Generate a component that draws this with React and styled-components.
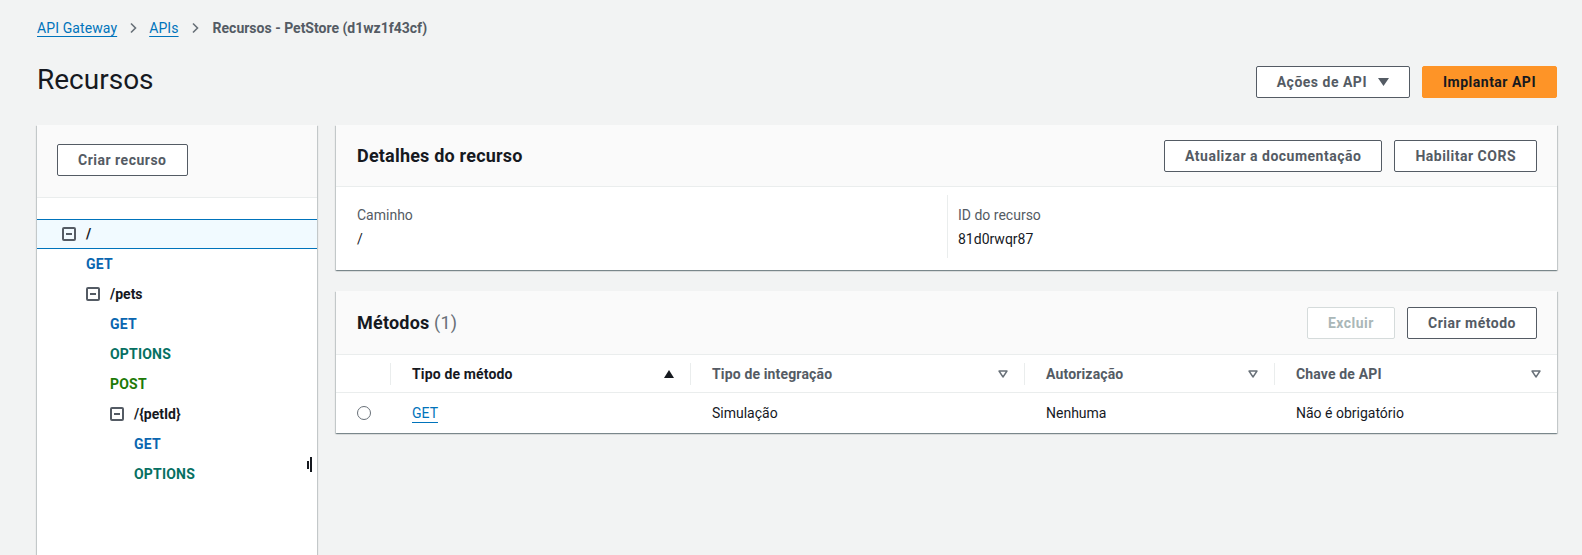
import React from "react";
import styled, { createGlobalStyle } from "styled-components";

const Global = createGlobalStyle`
  html, body { margin: 0; padding: 0; background: #f2f3f3; overflow: hidden; }
  body { font-family: Roboto, "Liberation Sans", Arial, sans-serif; color: #16191f; font-size: 14px; }
  * { box-sizing: border-box; }
`;

const Page = styled.div`
  padding: 0 25px 0 37px;
  height: 555px;
  overflow: hidden;
`;

const Crumbs = styled.nav`
  display: flex;
  align-items: center;
  height: 20px;
  margin-top: 18px;
  gap: 10px;
  font-size: 14px;
  line-height: 20px;
`;

const CrumbLink = styled.a`
  color: #0073bb;
  text-decoration: underline;
  text-underline-offset: 3px;
  letter-spacing: 0.1px;
`;

const CrumbCurrent = styled.span`
  color: #545b64;
  font-weight: 700;
  margin-left: 2px;
`;

const Chevron = () => (
  <svg width="12" height="12" viewBox="0 0 12 12" fill="none">
    <polyline points="4,1.5 8.5,6 4,10.5" stroke="#687078" strokeWidth="1.6" />
  </svg>
);

const HeaderRow = styled.div`
  display: flex;
  align-items: center;
  justify-content: space-between;
  margin-top: 28px;
  height: 32px;
`;

const Title = styled.h1`
  margin: 0;
  font-size: 28px;
  font-weight: 400;
  line-height: 32px;
  color: #16191f;
  position: relative;
  top: -2px;
`;

const Actions = styled.div`
  display: flex;
  gap: 12px;
  align-items: center;
`;

const Button = styled.button`
  font-family: inherit;
  font-size: 14px;
  font-weight: 700;
  letter-spacing: 0.5px;
  height: 32px;
  padding: 0 20px;
  border-radius: 2px;
  display: inline-flex;
  align-items: center;
  gap: 11px;
  background: ${(p) => (p.$primary ? "#fe9427" : "#ffffff")};
  border: 1px solid ${(p) => (p.$primary ? "#fe9427" : p.$disabled ? "#d5dbdb" : "#545b64")};
  color: ${(p) => (p.$primary ? "#16191f" : p.$disabled ? "#aab7b8" : "#545b64")};
  cursor: pointer;
`;

const Caret = () => (
  <svg width="11" height="8" viewBox="0 0 11 8">
    <polygon points="0,0 11,0 5.5,8" fill="#545b64" />
  </svg>
);

const Main = styled.div`
  display: flex;
  gap: 19px;
  margin-top: 27px;
  align-items: flex-start;
`;

const shadow = `box-shadow: 0 1px 1px 0 rgba(0,28,36,.3), 1px 1px 1px 0 rgba(0,28,36,.15), -1px 1px 1px 0 rgba(0,28,36,.15);`;

const SidePanel = styled.aside`
  position: relative;
  width: 280px;
  flex: none;
  min-height: 460px;
  background: #ffffff;
  ${shadow}
`;

const SideHeader = styled.div`
  height: 73px;
  background: #fafafa;
  border-bottom: 1px solid #eaeded;
  padding: 19px 20px 0;
`;

const Tree = styled.div`
  padding-top: 21px;
  display: flex;
  flex-direction: column;
`;

const TreeRow = styled.div`
  height: 30px;
  display: flex;
  align-items: center;
  gap: 10px;
  padding-left: ${(p) => 25 + p.$level * 24}px;
  background: ${(p) => (p.$selected ? "#f1faff" : "transparent")};
  border-top: 1px solid ${(p) => (p.$selected ? "#0073bb" : "transparent")};
  border-bottom: 1px solid ${(p) => (p.$selected ? "#0073bb" : "transparent")};
  font-weight: 700;
  font-size: 14px;
`;

const ResName = styled.span`
  color: #16191f;
`;

const methodColors = {
  GET: "#0a66b0",
  OPTIONS: "#067062",
  POST: "#1d7a08",
};

const Method = styled.span`
  color: ${(p) => methodColors[p.$m]};
  margin-left: 24px;
  letter-spacing: 0.2px;
`;

const Collapse = styled.span`
  width: 14px;
  height: 14px;
  border: 2px solid #545b64;
  border-radius: 2px;
  display: inline-flex;
  align-items: center;
  justify-content: center;
  flex: none;
  &::after {
    content: "";
    width: 6px;
    height: 2px;
    background: #545b64;
  }
`;

const Handle = styled.div`
  position: absolute;
  left: 270px;
  top: 332px;
  height: 15px;
  display: flex;
  align-items: center;
  gap: 1px;
  &::before {
    content: "";
    width: 2px;
    height: 8px;
    background: #16191f;
  }
  &::after {
    content: "";
    width: 2px;
    height: 15px;
    background: #16191f;
  }
`;

const Column = styled.div`
  flex: 1;
  display: flex;
  flex-direction: column;
  gap: 21px;
`;

const Card = styled.section`
  background: #ffffff;
  ${shadow}
`;

const CardHeader = styled.div`
  height: ${(p) => p.$h || 62}px;
  background: #fafafa;
  border-bottom: 1px solid #eaeded;
  display: flex;
  align-items: center;
  justify-content: space-between;
  padding: 0 20px 0 21px;
`;

const CardTitle = styled.h2`
  margin: 0;
  font-size: 18px;
  font-weight: 700;
  color: #16191f;
  letter-spacing: 0.2px;
`;

const Count = styled.span`
  font-weight: 400;
  color: #687078;
`;

const Details = styled.div`
  display: grid;
  grid-template-columns: 1fr 1fr;
  padding: 8px 20px 12px 21px;
`;

const Field = styled.div`
  padding: 10px 0 9px ${(p) => (p.$divided ? "10px" : "0")};
  border-left: ${(p) => (p.$divided ? "1px solid #eaeded" : "none")};
  display: flex;
  flex-direction: column;
  gap: 4px;
  line-height: 20px;
`;

const Label = styled.span`
  color: #545b64;
  font-size: 14px;
`;

const Value = styled.span`
  color: #16191f;
  font-size: 14px;
`;

const cols = "54px 300px 334px 250px 1fr";

const THead = styled.div`
  display: grid;
  grid-template-columns: ${cols};
  height: 38px;
  border-bottom: 1px solid #eaeded;
  align-items: center;
`;

const Th = styled.div`
  height: 22px;
  display: flex;
  align-items: center;
  justify-content: space-between;
  padding: 0 16px 0 21px;
  border-left: ${(p) => (p.$first ? "none" : "1px solid #eaeded")};
  font-weight: 700;
  letter-spacing: 0.15px;
  color: ${(p) => (p.$sorted ? "#16191f" : "#545b64")};
`;

const TRow = styled.div`
  display: grid;
  grid-template-columns: ${cols};
  height: 40px;
  align-items: center;
`;

const Td = styled.div`
  padding-left: ${(p) => (p.$radio ? "21px" : "22px")};
  color: #16191f;
`;

const Radio = styled.span`
  display: block;
  width: 14px;
  height: 14px;
  border-radius: 50%;
  border: 1px solid #687078;
`;

const TLink = styled.a`
  color: #0073bb;
  text-decoration: underline;
  text-underline-offset: 4px;
`;

const SortUp = () => (
  <svg width="10" height="8" viewBox="0 0 10 8">
    <polygon points="5,0 10,8 0,8" fill="#16191f" />
  </svg>
);

const SortDown = () => (
  <svg width="10" height="8" viewBox="0 0 10 8">
    <polygon points="1,1 9,1 5,7" fill="none" stroke="#687078" strokeWidth="1.4" strokeLinejoin="round" />
  </svg>
);

const tree = [
  { type: "res", level: 0, name: "/", selected: true },
  { type: "m", level: 0, name: "GET" },
  { type: "res", level: 1, name: "/pets" },
  { type: "m", level: 1, name: "GET" },
  { type: "m", level: 1, name: "OPTIONS" },
  { type: "m", level: 1, name: "POST" },
  { type: "res", level: 2, name: "/{petId}" },
  { type: "m", level: 2, name: "GET" },
  { type: "m", level: 2, name: "OPTIONS" },
];

export default function App() {
  return (
    <Page>
      <Global />
      <Crumbs>
        <CrumbLink>API Gateway</CrumbLink>
        <Chevron />
        <CrumbLink>APIs</CrumbLink>
        <Chevron />
        <CrumbCurrent>Recursos - PetStore (d1wz1f43cf)</CrumbCurrent>
      </Crumbs>
      <HeaderRow>
        <Title>Recursos</Title>
        <Actions>
          <Button>
            Ações de API <Caret />
          </Button>
          <Button $primary>Implantar API</Button>
        </Actions>
      </HeaderRow>
      <Main>
        <SidePanel>
          <SideHeader>
            <Button>Criar recurso</Button>
          </SideHeader>
          <Tree>
            {tree.map((t, i) =>
              t.type === "res" ? (
                <TreeRow key={i} $level={t.level} $selected={t.selected}>
                  <Collapse />
                  <ResName>{t.name}</ResName>
                </TreeRow>
              ) : (
                <TreeRow key={i} $level={t.level}>
                  <Method $m={t.name}>{t.name}</Method>
                </TreeRow>
              )
            )}
          </Tree>
          <Handle />
        </SidePanel>
        <Column>
          <Card>
            <CardHeader>
              <CardTitle>Detalhes do recurso</CardTitle>
              <Actions>
                <Button>Atualizar a documentação</Button>
                <Button>Habilitar CORS</Button>
              </Actions>
            </CardHeader>
            <Details>
              <Field>
                <Label>Caminho</Label>
                <Value>/</Value>
              </Field>
              <Field $divided>
                <Label>ID do recurso</Label>
                <Value>81d0rwqr87</Value>
              </Field>
            </Details>
          </Card>
          <Card>
            <CardHeader $h={64}>
              <CardTitle>
                Métodos <Count>(1)</Count>
              </CardTitle>
              <Actions>
                <Button $disabled>Excluir</Button>
                <Button>Criar método</Button>
              </Actions>
            </CardHeader>
            <THead>
              <Th $first />
              <Th $sorted>
                Tipo de método <SortUp />
              </Th>
              <Th>
                Tipo de integração <SortDown />
              </Th>
              <Th>
                Autorização <SortDown />
              </Th>
              <Th>
                Chave de API <SortDown />
              </Th>
            </THead>
            <TRow>
              <Td $radio>
                <Radio />
              </Td>
              <Td>
                <TLink>GET</TLink>
              </Td>
              <Td>Simulação</Td>
              <Td>Nenhuma</Td>
              <Td>Não é obrigatório</Td>
            </TRow>
          </Card>
        </Column>
      </Main>
    </Page>
  );
}
